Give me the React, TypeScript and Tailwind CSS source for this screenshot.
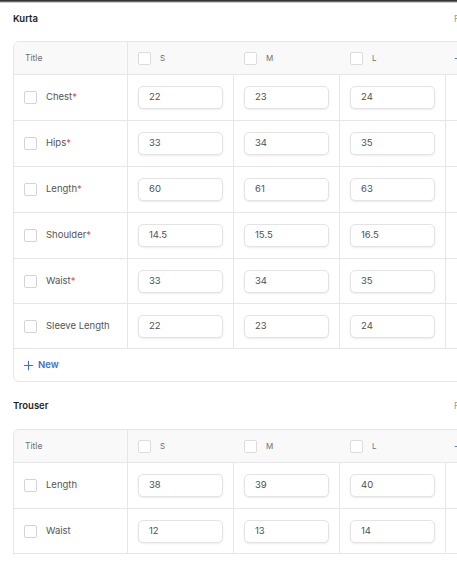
import React from "react";

type Row = { label: string; req?: boolean; vals: string[] };

const kurta: Row[] = [
  { label: "Chest", req: true, vals: ["22", "23", "24"] },
  { label: "Hips", req: true, vals: ["33", "34", "35"] },
  { label: "Length", req: true, vals: ["60", "61", "63"] },
  { label: "Shoulder", req: true, vals: ["14.5", "15.5", "16.5"] },
  { label: "Waist", req: true, vals: ["33", "34", "35"] },
  { label: "Sleeve Length", vals: ["22", "23", "24"] },
];

const trouser: Row[] = [
  { label: "Length", vals: ["38", "39", "40"] },
  { label: "Waist", vals: ["12", "13", "14"] },
];

function Box({ small }: { small?: boolean }) {
  return (
    <span
      className={
        "inline-block w-[13px] h-[13px] rounded-[2px] border bg-white shrink-0 " +
        (small ? "border-[#d4d4d4]" : "border-[#dcdcdc]")
      }
    />
  );
}

function Plus({ className }: { className?: string }) {
  return (
    <svg viewBox="0 0 12 12" className={className} fill="none" stroke="currentColor" strokeWidth="1.2" strokeLinecap="round">
      <path d="M6 1.5v9M1.5 6h9" />
    </svg>
  );
}

function Table({ rows, heights, showNew, open }: { rows: Row[]; heights: string[]; showNew?: boolean; open?: boolean }) {
  return (
    <div
      className={
        "ml-[13px] w-[520px] border border-[#e6e6e6] rounded-[6px] overflow-hidden bg-white " +
        (open ? "border-b-0 rounded-b-none" : "")
      }
    >
      <div className="grid grid-cols-[114px_106px_106px_106px_1fr] h-[33px] bg-[#f9f9f9] border-b border-[#e6e6e6]">
        <div className="flex items-center pl-[11px] border-r border-[#e6e6e6] text-[8.5px] text-[#6f6f6f]">Title</div>
        {["S", "M", "L"].map((s) => (
          <div key={s} className="flex items-center pl-[10px] gap-[9px] text-[8px] text-[#6f6f6f]">
            <Box />
            <span>{s}</span>
          </div>
        ))}
        <div className="flex items-center pl-[8px] text-[#3b6fd6]">
          <Plus className="w-[9px] h-[9px]" />
        </div>
      </div>
      {rows.map((r, i) => (
        <div
          key={r.label}
          className={"grid grid-cols-[114px_106px_106px_106px_1fr] border-b border-[#e6e6e6] " + heights[i]}
        >
          <div className="flex items-center pl-[10px] gap-[9px] border-r border-[#e6e6e6] text-[9.5px] text-[#555555]">
            <Box small />
            <span>
              {r.label}
              {r.req && <span className="text-[#e24c4c]">*</span>}
            </span>
          </div>
          {r.vals.map((v, j) => (
            <div key={j} className="flex items-center pl-[10px] border-r border-[#e6e6e6]">
              <div className="w-[85px] h-[23px] rounded-[5px] border border-[#e3e3e3] shadow-[0_1px_2px_rgba(0,0,0,0.08)] bg-white flex items-center pl-[10px] text-[9.5px] text-[#505050]">
                {v}
              </div>
            </div>
          ))}
          <div />
        </div>
      ))}
      {showNew && (
        <div className="h-[32px] flex items-center pl-[9px] gap-[4px] text-[#3b6fd6] text-[9.5px] font-semibold">
          <Plus className="w-[11px] h-[11px]" />
          <span>New</span>
        </div>
      )}
    </div>
  );
}

function Heading({ title }: { title: string }) {
  return (
    <div className="flex justify-between items-center h-[14px] w-[520px] pl-[13px]">
      <span className="text-[9.5px] font-semibold text-[#1f1f1f]">{title}</span>
      <span className="absolute left-[454px] text-[9px] text-[#9a9a9a]">F</span>
    </div>
  );
}

export default function App() {
  return (
    <div
      className="w-[457px] h-[562px] overflow-hidden bg-white relative"
      style={{ fontFamily: "Inter, 'Noto Sans', sans-serif" }}
    >
      <div className="h-[3px] bg-gradient-to-b from-[#1a1a1a] via-[#6a6a6a] to-white" />
      <div className="w-[520px]">
        <div className="pt-[9px] relative">
          <Heading title="Kurta" />
        </div>
        <div className="mt-[15px]">
          <Table
            rows={kurta}
            showNew
            heights={["h-[46px]", "h-[46px]", "h-[46px]", "h-[46px]", "h-[45px]", "h-[45px]"]}
          />
        </div>
        <div className="mt-[17px] relative">
          <Heading title="Trouser" />
        </div>
        <div className="mt-[16px]">
          <Table rows={trouser} heights={["h-[46px]", "h-[45px]"]} open />
        </div>
      </div>
    </div>
  );
}
